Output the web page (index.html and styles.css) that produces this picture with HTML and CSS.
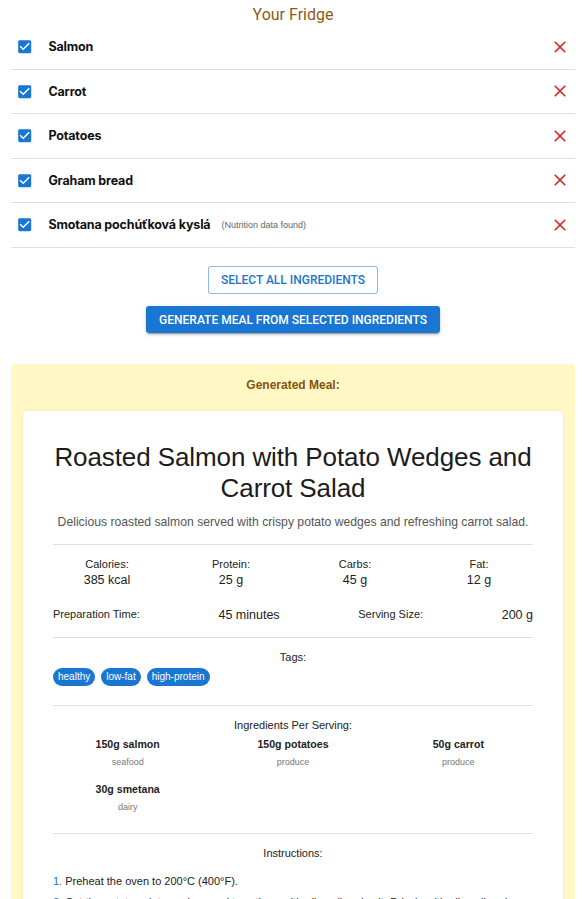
FILE: index.html
```html
<!DOCTYPE html>
<html lang="en">
<head>
<meta charset="utf-8">
<title>Your Fridge</title>
<link rel="stylesheet" href="styles.css">
</head>
<body>
<div class="page">
  <h2 class="fridge-title">Your Fridge</h2>
  <ul class="fridge-list">
    <li class="fridge-row">
      <svg class="check" viewBox="0 0 24 24"><path d="M19 3H5c-1.11 0-2 .9-2 2v14c0 1.1.89 2 2 2h14c1.11 0 2-.9 2-2V5c0-1.1-.89-2-2-2zm-9 14l-5-5 1.41-1.41L10 14.17l7.59-7.59L19 8l-9 9z"/></svg>
      <span class="item-name">Salmon</span>
      <svg class="remove" viewBox="0 0 24 24"><path d="M19 6.41 17.59 5 12 10.59 6.41 5 5 6.41 10.59 12 5 17.59 6.41 19 12 13.41 17.59 19 19 17.59 13.41 12z"/></svg>
    </li>
    <li class="fridge-row">
      <svg class="check" viewBox="0 0 24 24"><path d="M19 3H5c-1.11 0-2 .9-2 2v14c0 1.1.89 2 2 2h14c1.11 0 2-.9 2-2V5c0-1.1-.89-2-2-2zm-9 14l-5-5 1.41-1.41L10 14.17l7.59-7.59L19 8l-9 9z"/></svg>
      <span class="item-name">Carrot</span>
      <svg class="remove" viewBox="0 0 24 24"><path d="M19 6.41 17.59 5 12 10.59 6.41 5 5 6.41 10.59 12 5 17.59 6.41 19 12 13.41 17.59 19 19 17.59 13.41 12z"/></svg>
    </li>
    <li class="fridge-row">
      <svg class="check" viewBox="0 0 24 24"><path d="M19 3H5c-1.11 0-2 .9-2 2v14c0 1.1.89 2 2 2h14c1.11 0 2-.9 2-2V5c0-1.1-.89-2-2-2zm-9 14l-5-5 1.41-1.41L10 14.17l7.59-7.59L19 8l-9 9z"/></svg>
      <span class="item-name">Potatoes</span>
      <svg class="remove" viewBox="0 0 24 24"><path d="M19 6.41 17.59 5 12 10.59 6.41 5 5 6.41 10.59 12 5 17.59 6.41 19 12 13.41 17.59 19 19 17.59 13.41 12z"/></svg>
    </li>
    <li class="fridge-row">
      <svg class="check" viewBox="0 0 24 24"><path d="M19 3H5c-1.11 0-2 .9-2 2v14c0 1.1.89 2 2 2h14c1.11 0 2-.9 2-2V5c0-1.1-.89-2-2-2zm-9 14l-5-5 1.41-1.41L10 14.17l7.59-7.59L19 8l-9 9z"/></svg>
      <span class="item-name">Graham bread</span>
      <svg class="remove" viewBox="0 0 24 24"><path d="M19 6.41 17.59 5 12 10.59 6.41 5 5 6.41 10.59 12 5 17.59 6.41 19 12 13.41 17.59 19 19 17.59 13.41 12z"/></svg>
    </li>
    <li class="fridge-row">
      <svg class="check" viewBox="0 0 24 24"><path d="M19 3H5c-1.11 0-2 .9-2 2v14c0 1.1.89 2 2 2h14c1.11 0 2-.9 2-2V5c0-1.1-.89-2-2-2zm-9 14l-5-5 1.41-1.41L10 14.17l7.59-7.59L19 8l-9 9z"/></svg>
      <span class="item-name">Smotana pochúťková kyslá</span>
      <span class="item-note">(Nutrition data found)</span>
      <svg class="remove" viewBox="0 0 24 24"><path d="M19 6.41 17.59 5 12 10.59 6.41 5 5 6.41 10.59 12 5 17.59 6.41 19 12 13.41 17.59 19 19 17.59 13.41 12z"/></svg>
    </li>
  </ul>

  <div class="actions">
    <button class="btn btn-outlined">Select all ingredients</button>
    <button class="btn btn-contained">Generate meal from selected ingredients</button>
  </div>

  <section class="meal-panel">
    <h3 class="meal-panel-title">Generated Meal:</h3>
    <div class="meal-card">
      <h1 class="meal-title">Roasted Salmon with Potato Wedges and Carrot Salad</h1>
      <p class="meal-desc">Delicious roasted salmon served with crispy potato wedges and refreshing carrot salad.</p>
      <hr class="divider">
      <div class="nutrition">
        <div class="nut-item"><div class="nut-label">Calories:</div><div class="nut-value">385 kcal</div></div>
        <div class="nut-item"><div class="nut-label">Protein:</div><div class="nut-value">25 g</div></div>
        <div class="nut-item"><div class="nut-label">Carbs:</div><div class="nut-value">45 g</div></div>
        <div class="nut-item"><div class="nut-label">Fat:</div><div class="nut-value">12 g</div></div>
      </div>
      <div class="prep-row">
        <span class="prep-label">Preparation Time:</span>
        <span class="prep-value">45 minutes</span>
        <span class="prep-label">Serving Size:</span>
        <span class="prep-value">200 g</span>
      </div>
      <hr class="divider">
      <div class="section-heading">Tags:</div>
      <div class="tags">
        <span class="tag">healthy</span>
        <span class="tag">low-fat</span>
        <span class="tag">high-protein</span>
      </div>
      <hr class="divider divider-tags">
      <div class="section-heading">Ingredients Per Serving:</div>
      <div class="ingredients">
        <div class="ing"><div class="ing-name">150g salmon</div><div class="ing-cat">seafood</div></div>
        <div class="ing"><div class="ing-name">150g potatoes</div><div class="ing-cat">produce</div></div>
        <div class="ing"><div class="ing-name">50g carrot</div><div class="ing-cat">produce</div></div>
        <div class="ing"><div class="ing-name">30g smetana</div><div class="ing-cat">dairy</div></div>
      </div>
      <hr class="divider divider-ing">
      <div class="section-heading">Instructions:</div>
      <ol class="steps">
        <li>Preheat the oven to 200°C (400°F).</li>
        <li>Cut the potatoes into wedges and toss them with olive oil and salt. Drizzle with olive oil and season.</li>
        <li>Place the salmon on a baking sheet and roast for 15 minutes.</li>
      </ol>
    </div>
  </section>
</div>
</body>
</html>
```

FILE: styles.css
```css
* { box-sizing: border-box; }
html, body { margin: 0; padding: 0; background: #fff; }
body { font-family: Roboto, "Liberation Sans", Arial, sans-serif; color: #222; }

.page { padding: 0 7px 0 11px; }

.fridge-title {
  margin: 5px 0 0;
  font-size: 16px;
  line-height: 20px;
  font-weight: 400;
  color: #8d5a16;
  text-align: center;
}

.fridge-list { list-style: none; margin: 0; padding: 0; }
.fridge-row {
  display: flex;
  align-items: center;
  height: 44.5px;
  padding: 0 5px;
  border-bottom: 1px solid #e0e0e0;
}
.check { width: 17.4px; height: 17.4px; fill: #1976d2; flex: none; }
.item-name {
  margin-left: 15px;
  font-family: Inter, "Noto Sans", sans-serif;
  font-weight: 700;
  font-size: 12.5px;
  color: #111;
  letter-spacing: -0.15px;
}
.item-note {
  margin-left: 11px;
  font-family: "Liberation Sans", Arial, sans-serif;
  font-size: 9px;
  color: #666;
}
.remove { width: 20px; height: 20px; fill: #d32f2f; margin-left: auto; flex: none; }

.actions {
  display: flex;
  flex-direction: column;
  align-items: center;
  gap: 12px;
  margin-top: 18.5px;
}
.btn {
  font-family: Roboto, sans-serif;
  font-weight: 500;
  font-size: 12px;
  letter-spacing: 0;
  text-transform: uppercase;
  border-radius: 3px;
  cursor: pointer;
}
.btn-outlined {
  height: 28px;
  padding: 0 12px;
  background: #fff;
  color: #1976d2;
  border: 1px solid rgba(25,118,210,0.5);
}
.btn-contained {
  height: 27px;
  padding: 0 13px;
  background: #1976d2;
  color: #fff;
  border: none;
  box-shadow: 0 3px 1px -2px rgba(0,0,0,.2), 0 2px 2px 0 rgba(0,0,0,.14), 0 1px 5px 0 rgba(0,0,0,.12);
}

.meal-panel {
  margin-top: 31px;
  background: #fff8c4;
  border-radius: 4px;
  padding: 13px 12px 0;
  font-family: "Liberation Sans", Arial, sans-serif;
}
.meal-panel-title {
  margin: 0;
  font-size: 12px;
  line-height: 16px;
  font-weight: 700;
  color: #84540f;
  text-align: center;
}
.meal-card {
  margin-top: 18px;
  background: #fff;
  border-radius: 4px 4px 0 0;
  padding: 31px 30px 20px;
  box-shadow: 0 0 3px rgba(0,0,0,0.08);
}
.meal-title {
  margin: 0;
  font-size: 26px;
  line-height: 31px;
  font-weight: 400;
  letter-spacing: -0.1px;
  text-align: center;
  color: #1c1c1c;
}
.meal-desc {
  margin: 10px 0 0;
  font-size: 12.2px;
  line-height: 16px;
  color: #555;
  text-align: center;
}
.divider { border: 0; border-top: 1px solid #e0e0e0; margin: 14px 0 0; }

.nutrition {
  display: grid;
  grid-template-columns: repeat(4, 1fr);
  column-gap: 16px;
  margin-top: 12px;
  text-align: center;
}
.nut-label { font-size: 11px; line-height: 14px; color: #222; }
.nut-value { font-size: 12.5px; line-height: 16px; margin-top: 1px; color: #222; }

.prep-row {
  display: flex;
  justify-content: space-between;
  align-items: baseline;
  margin-top: 19px;
  line-height: 16px;
}
.prep-label { font-size: 11px; color: #222; position: relative; top: -1px; }
.prep-value { font-size: 12.5px; color: #222; }

.section-heading {
  margin-top: 12px;
  font-size: 11px;
  line-height: 14px;
  text-align: center;
  color: #222;
}
.tags { display: flex; gap: 6px; margin-top: 4px; }
.tag {
  height: 18px;
  line-height: 18px;
  padding: 0 5px;
  border-radius: 9px;
  background: #1976d2;
  color: #fff;
  font-size: 10px;
}
.divider-tags { margin-top: 19px; }

.ingredients {
  display: grid;
  grid-template-columns: repeat(3, 1fr);
  column-gap: 16px;
  row-gap: 14px;
  margin-top: 5px;
  text-align: center;
}
.ing-name { font-size: 10.6px; line-height: 14px; font-weight: 700; color: #222; }
.ing-cat { font-size: 9px; line-height: 12px; margin-top: 5px; color: #777; }
.divider-ing { margin-top: 20px; }

.steps {
  margin: 14px 0 0;
  padding: 0;
  list-style-position: inside;
  font-size: 11px;
  line-height: 14px;
  color: #222;
}
.steps li { margin-bottom: 7px; }
.steps li::marker { color: #1976d2; }
```
